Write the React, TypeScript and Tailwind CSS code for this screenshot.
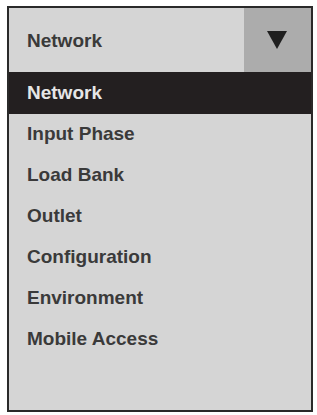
import React from "react";

const items = [
  "Network",
  "Input Phase",
  "Load Bank",
  "Outlet",
  "Configuration",
  "Environment",
  "Mobile Access",
];

export default function App() {
  const [selected, setSelected] = React.useState("Network");

  return (
    <div className="w-[317px] h-[415px] bg-white pt-[6px] pl-[7px] font-['Liberation_Sans',Arial,sans-serif]">
      <div className="w-[306px] h-[406px] border-2 border-[#2a2a2a] bg-[#d5d5d5] flex flex-col">
        {/* Select header */}
        <div className="h-[64px] flex items-stretch shrink-0">
          <div className="flex-1 flex items-center pl-[18px] text-[19px] font-bold text-[#3a3a3a] pt-[2px]">
            {selected}
          </div>
          <div className="w-[67px] bg-[#acacac] flex items-center justify-center">
            <svg width="20" height="18" viewBox="0 0 20 18" className="ml-[-2px]">
              <polygon points="0,0 20,0 10,18" fill="#1f1f1f" />
            </svg>
          </div>
        </div>

        {/* Options */}
        <ul className="flex flex-col">
          {items.map((item, i) => {
            const active = item === selected;
            return (
              <li
                key={item}
                onClick={() => setSelected(item)}
                className={`flex items-center pl-[18px] text-[19px] font-bold cursor-pointer ${
                  i === 0 ? "h-[42px]" : "h-[41px]"
                } ${active ? "bg-[#231f20] text-[#e6e6e6]" : "text-[#3a3a3a]"}`}
              >
                {item}
              </li>
            );
          })}
        </ul>
      </div>
    </div>
  );
}
